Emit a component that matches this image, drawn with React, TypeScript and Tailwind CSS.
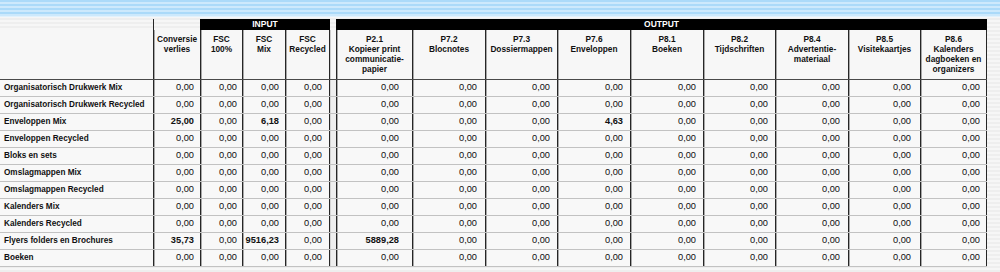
import React from "react";

type Col = { w: string; pr: string; head: string[] };

const inputCols: Col[] = [
  { w: "w-[42px]", pr: "pr-[5px]", head: ["FSC", "100%"] },
  { w: "w-[43px]", pr: "pr-[6px]", head: ["FSC", "Mix"] },
  { w: "w-[45px] border-r", pr: "pr-[7px]", head: ["FSC", "Recycled"] },
];

const outputCols: Col[] = [
  { w: "w-[76px]", pr: "pr-[13px]", head: ["P2.1", "Kopieer print", "communicatie-", "papier"] },
  { w: "w-[73px]", pr: "pr-[8px]", head: ["P7.2", "Blocnotes"] },
  { w: "w-[72px]", pr: "pr-[7px]", head: ["P7.3", "Dossiermappen"] },
  { w: "w-[73px]", pr: "pr-[7px]", head: ["P7.6", "Enveloppen"] },
  { w: "w-[73px]", pr: "pr-[7px]", head: ["P8.1", "Boeken"] },
  { w: "w-[72px]", pr: "pr-[7px]", head: ["P8.2", "Tijdschriften"] },
  { w: "w-[73px]", pr: "pr-[8px]", head: ["P8.4", "Advertentie-", "materiaal"] },
  { w: "w-[72px]", pr: "pr-[9px]", head: ["P8.5", "Visitekaartjes"] },
  { w: "w-[67px] border-r", pr: "pr-[6px]", head: ["P8.6", "Kalenders", "dagboeken en", "organizers"] },
];

const conv: Col = { w: "w-[47px]", pr: "pr-[6px]", head: ["Conversie", "verlies"] };

// values: [conversie, fsc100, fscMix, fscRecycled, ...9 outputs]; non-zero ones are bold
type Row = { label: string; vals: string[] };

const z = "0,00";
const zeros = () => Array(13).fill(z);

const rows: Row[] = [
  { label: "Organisatorisch Drukwerk Mix", vals: zeros() },
  { label: "Organisatorisch Drukwerk Recycled", vals: zeros() },
  { label: "Enveloppen Mix", vals: ["25,00", z, "6,18", z, z, z, z, "4,63", z, z, z, z, z] },
  { label: "Enveloppen Recycled", vals: zeros() },
  { label: "Bloks en sets", vals: zeros() },
  { label: "Omslagmappen Mix", vals: zeros() },
  { label: "Omslagmappen Recycled", vals: zeros() },
  { label: "Kalenders Mix", vals: zeros() },
  { label: "Kalenders Recycled", vals: zeros() },
  { label: "Flyers folders en Brochures", vals: ["35,73", z, "9516,23", z, "5889,28", z, z, z, z, z, z, z, z] },
  { label: "Boeken", vals: zeros() },
];

const allCols = [conv, ...inputCols, null, ...outputCols];

function HeadCell({ col }: { col: Col }) {
  return (
    <div className={`${col.w} shrink-0 h-full border-l border-[#262626] shadow-[inset_1px_0_0_#a8a8a8] pt-[4px] text-center font-bold text-[8.3px] leading-[10px]`}>
      {col.head.map((l) => (
        <div key={l}>{l}</div>
      ))}
    </div>
  );
}

function ValCell({ col, v }: { col: Col; v: string }) {
  return (
    <div
      className={`${col.w} ${col.pr} shrink-0 h-full border-l border-[#262626] shadow-[inset_1px_0_0_#a8a8a8] flex items-center justify-end text-[9.25px] ${
        v !== z ? "font-bold" : ""
      }`}
    >
      {v}
    </div>
  );
}

export default function App() {
  return (
    <div className="w-[1000px] h-[272px] overflow-hidden text-[#111] font-['Liberation_Sans',Arial,sans-serif] bg-[repeating-linear-gradient(to_bottom,#f6f6f6_0px,#f6f6f6_2px,#eeeeee_2px,#eeeeee_4px)]">
      <div className="h-[17px] bg-[repeating-linear-gradient(to_bottom,#abdaf9_0px,#abdaf9_2px,#cde9fc_2px,#cde9fc_4px)] border-b border-[#e2f2fd]" />

      <div className="w-[987px]">
        {/* band row */}
        <div className="flex h-[13px] pt-[2px]">
          <div className="w-[153px] shrink-0" />
          <div className="w-[47px] shrink-0 border-l border-[#262626]" />
          <div className="w-[130px] shrink-0 bg-black text-white font-bold text-[8.5px] leading-[11px] text-center">INPUT</div>
          <div className="w-[6px] shrink-0" />
          <div className="w-[651px] shrink-0 bg-black text-white font-bold text-[8.5px] leading-[11px] text-center">OUTPUT</div>
        </div>

        {/* header row */}
        <div className="flex h-[50px] border-b border-[#4a4a4a] bg-[#f7f7f7]">
          <div className="w-[153px] shrink-0" />
          {allCols.map((c, i) =>
            c ? <HeadCell key={i} col={c} /> : <div key={i} className="w-[6px] shrink-0 border-l border-[#cfcfcf]" />
          )}
        </div>

        {/* data rows */}
        {rows.map((r) => {
          let vi = 0;
          return (
            <div key={r.label} className="flex h-[17px] border-b border-[#c2c2c2] bg-[#f8f8f8]">
              <div className="w-[153px] shrink-0 pl-[4px] flex items-center font-bold text-[8.2px]">{r.label}</div>
              {allCols.map((c, i) => {
                if (!c) return <div key={i} className="w-[6px] shrink-0 border-l border-[#d4d4d4] bg-[#eeeeee]" />;
                const v = r.vals[vi++];
                return <ValCell key={i} col={c} v={v} />;
              })}
            </div>
          );
        })}
      </div>
    </div>
  );
}
